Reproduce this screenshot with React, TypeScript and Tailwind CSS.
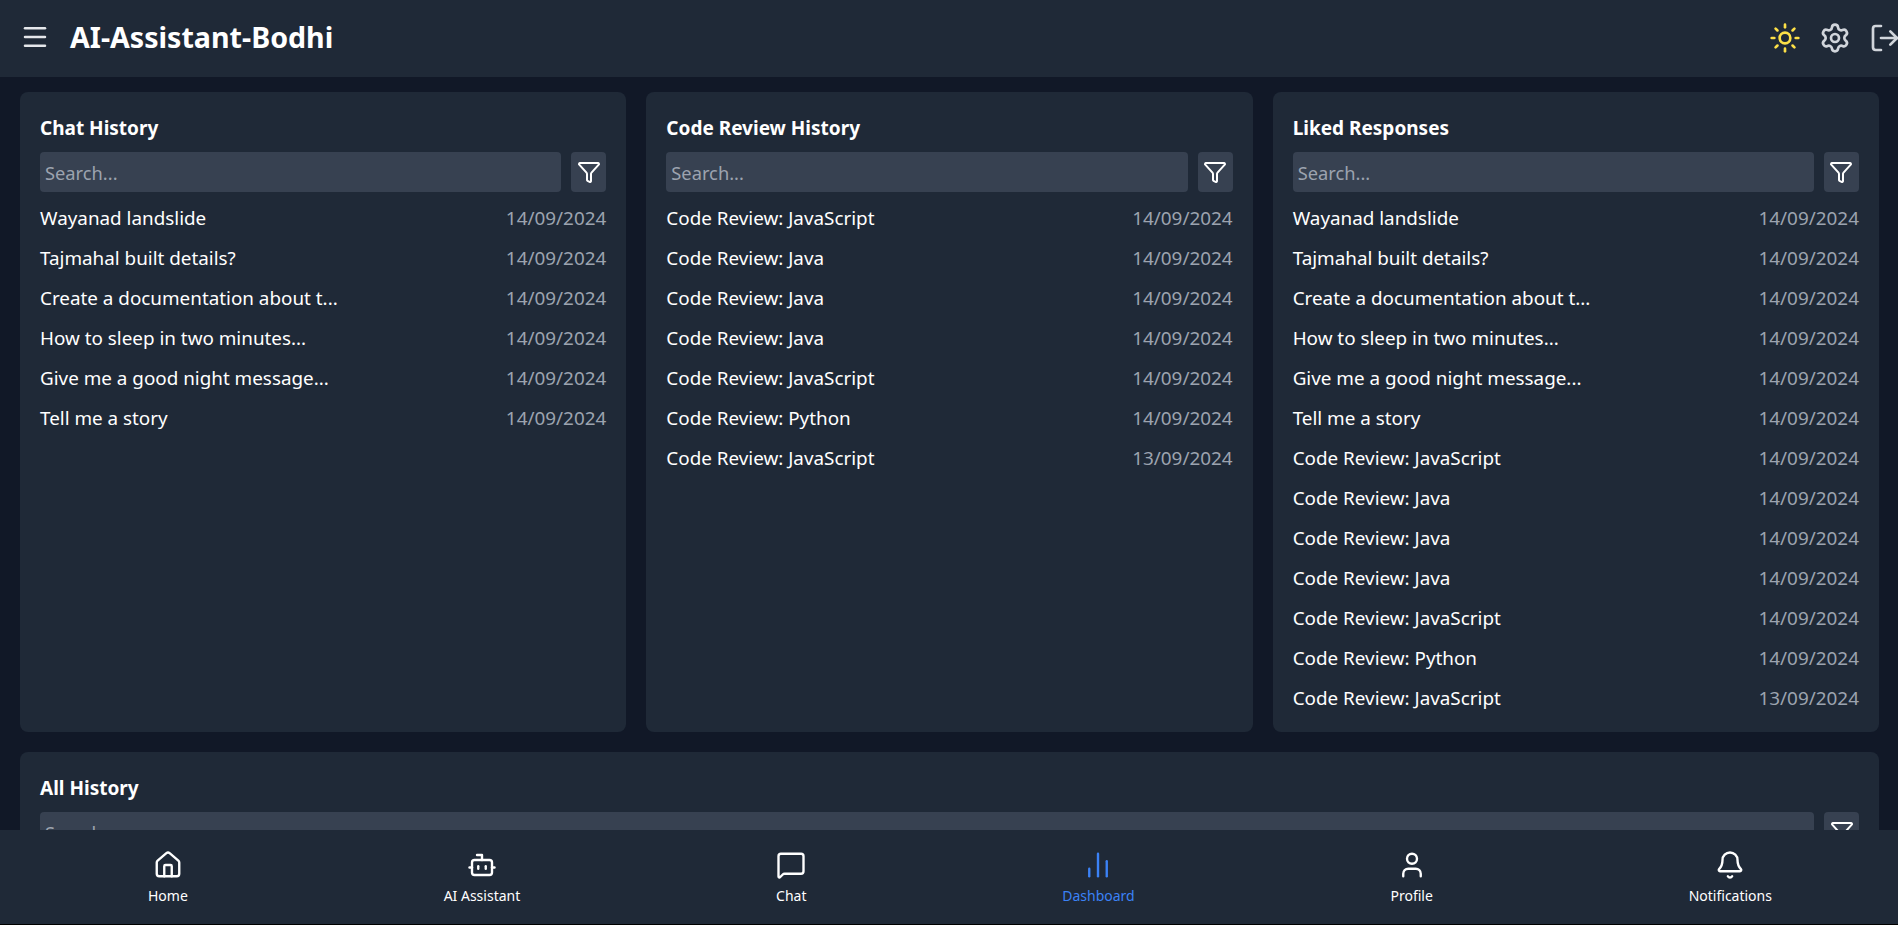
import { Bell, Bot, ChartNoAxesColumn, Funnel, House, LogOut, Menu, MessageSquare, Settings, Sun, User } from 'lucide-react';

type Item = { title: string; date: string };

const chats: Item[] = [
  { title: 'Wayanad landslide', date: '14/09/2024' },
  { title: 'Tajmahal built details?', date: '14/09/2024' },
  { title: 'Create a documentation about t...', date: '14/09/2024' },
  { title: 'How to sleep in two minutes...', date: '14/09/2024' },
  { title: 'Give me a good night message...', date: '14/09/2024' },
  { title: 'Tell me a story', date: '14/09/2024' },
];

const reviews: Item[] = [
  { title: 'Code Review: JavaScript', date: '14/09/2024' },
  { title: 'Code Review: Java', date: '14/09/2024' },
  { title: 'Code Review: Java', date: '14/09/2024' },
  { title: 'Code Review: Java', date: '14/09/2024' },
  { title: 'Code Review: JavaScript', date: '14/09/2024' },
  { title: 'Code Review: Python', date: '14/09/2024' },
  { title: 'Code Review: JavaScript', date: '13/09/2024' },
];

const navItems = [
  { label: 'Home', icon: House },
  { label: 'AI Assistant', icon: Bot },
  { label: 'Chat', icon: MessageSquare },
  { label: 'Dashboard', icon: ChartNoAxesColumn, active: true },
  { label: 'Profile', icon: User },
  { label: 'Notifications', icon: Bell },
];

function SearchRow() {
  return (
    <div className="flex gap-[10px]">
      <input
        placeholder="Search..."
        className="h-10 min-w-0 flex-1 rounded bg-[#374151] px-[5px] text-[18.3px] text-white outline-none placeholder:text-[#9ca3af]"
      />
      <button className="flex h-10 w-[35px] shrink-0 items-center justify-center rounded bg-[#374151] text-white">
        <Funnel size={24} />
      </button>
    </div>
  );
}

function HistoryCard({ title, items }: { title: string; items: Item[] }) {
  return (
    <section className="rounded-lg bg-[#1f2937] px-5 pt-5 pb-[14px]">
      <h2 className="mb-[10px] h-[30px] pt-px text-[19px] leading-[30px] font-bold text-white">{title}</h2>
      <SearchRow />
      <ul className="mt-[6px]">
        {items.map((item, i) => (
          <li key={i} className="flex h-10 items-center justify-between">
            <span className="text-[18.85px] text-white">{item.title}</span>
            <span className="text-[18.9px] text-[#9ca3af]">{item.date}</span>
          </li>
        ))}
      </ul>
    </section>
  );
}

export default function App() {
  return (
    <div className="flex h-[925px] flex-col overflow-hidden bg-black font-['Noto_Sans',sans-serif]">
      <header className="flex h-[77px] shrink-0 items-center justify-between overflow-hidden bg-[#1f2937] pb-[2px] pl-5">
        <div className="flex items-center gap-[20px]">
          <Menu size={30} className="text-[#e5e7eb]" />
          <h1 className="text-[28.6px] font-bold text-white">AI-Assistant-Bodhi</h1>
        </div>
        <div className="mr-[-3px] flex items-center gap-[18px]">
          <Sun size={32} className="text-[#fde047]" />
          <Settings size={32} className="text-[#d1d5db]" />
          <LogOut size={32} className="text-[#d1d5db]" />
        </div>
      </header>

      <main className="min-h-0 flex-1 overflow-hidden bg-[#111827] pt-[15px] pr-[19px] pb-5 pl-5">
        <div className="grid grid-cols-3 gap-5">
          <HistoryCard title="Chat History" items={chats} />
          <HistoryCard title="Code Review History" items={reviews} />
          <HistoryCard title="Liked Responses" items={[...chats, ...reviews]} />
        </div>
        <section className="mt-5 rounded-lg bg-[#1f2937] p-5">
          <h2 className="mb-[10px] h-[30px] pt-px text-[19px] leading-[30px] font-bold text-white">All History</h2>
          <SearchRow />
        </section>
      </main>

      <nav className="mb-px flex h-[94px] shrink-0 items-center justify-between bg-[#1f2937] pr-[126px] pl-[148px]">
        {navItems.map(({ label, icon: Icon, active }) => (
          <a key={label} className={`flex flex-col items-center gap-[6px] pt-[2px] text-[14px] leading-5 ${active ? 'text-[#3b82f6]' : 'text-white'}`}>
            <Icon size={30} strokeWidth={1.9} />
            <span>{label}</span>
          </a>
        ))}
      </nav>
    </div>
  );
}
